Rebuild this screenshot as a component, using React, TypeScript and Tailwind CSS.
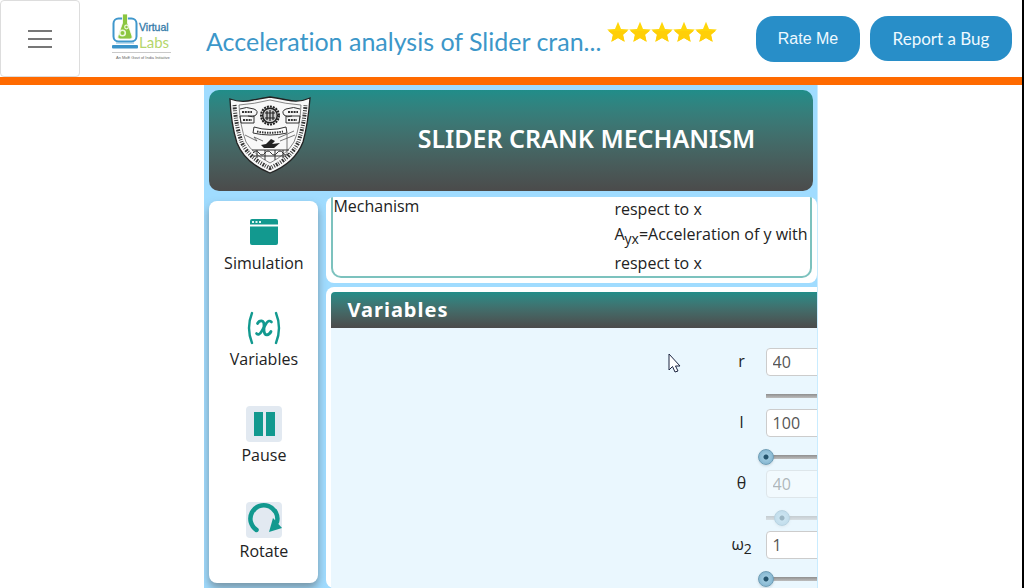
import React, { useState } from "react";

const Logo = () => (
  <svg viewBox="0 0 62 48" className="h-12 w-[62px]" role="img" aria-label="Virtual Labs">
    <rect x="1.500" y="5.500" width="23" height="23" rx="5" fill="#fff" stroke="#3f97cc" strokeWidth="2" />
    <rect x="0" y="32" width="26" height="3.600" rx="1" fill="#3a93c9" />
    <path d="M4 30h18" stroke="#7fb9dd" strokeWidth="1" />
    <path d="M10.500 1h5v9l4.500 13q1 3-2 3h-10q-3 0-2-3l4.500-13z" fill="#8cc63f" stroke="#fff" strokeWidth=".8" />
    <circle cx="10.500" cy="20" r="2.800" fill="none" stroke="#eef8dc" strokeWidth="1.600" />
    <circle cx="14.500" cy="14" r="1.800" fill="none" stroke="#eef8dc" strokeWidth="1.200" />
    <text x="27" y="18" fontSize="10.500" fill="#3279a8" stroke="#3279a8" strokeWidth=".3" fontFamily="'Liberation Sans', sans-serif">Virtual</text>
    <text x="27" y="35" fontSize="15" fill="#b4d66b" fontFamily="Lato, sans-serif">Labs</text>
    <path d="M0 39.500h59" stroke="#bbb" strokeWidth=".8" />
    <text x="4" y="46" fontSize="4" fill="#666" fontFamily="'Liberation Sans', sans-serif">An MoE Govt of India Initiative</text>
  </svg>
);

const Star = () => (
  <svg viewBox="0 0 22 22" className="size-[22px]" aria-hidden="true">
    <path d="M11 .8 14 7.9 21.8 8.6 16 13.7 17.6 20.8 11 17.1 4.4 20.8 6 13.7.2 8.6 8 7.9z" fill="#ffd60a" />
    <path d="M1.5 10 20.5 10 16 13.7 17.6 20.8 11 17.1 4.4 20.8 6 13.7z" fill="#ffcf08" />
  </svg>
);

const Shield = () => (
  <svg viewBox="0 0 82 78" className="h-[78px] w-[82px]" role="img" aria-label="Institute crest">
    <path d="M1 3Q12 7 24 4Q34 2 41 1Q48 2 58 4Q70 7 81 2Q79 28 74 46Q66 67 41 77Q16 67 8 47Q2 28 1 3z" fill="#f8f8f8" stroke="#222" strokeWidth="1.3" />
    <path d="M10 9Q25 8 41 4Q57 8 72 9Q71 32 65 46Q58 58 41 67Q24 58 17 46Q11 30 10 9z" fill="none" stroke="#555" strokeWidth=".7" />
    <path d="M5.500 9Q7 31 13 47Q21 63 41 72Q61 63 69 47Q75 30 76.500 9" fill="none" stroke="#333" strokeWidth="4" strokeDasharray="1 1.300 1.800 1 .8 1.500" />
    <circle cx="41" cy="19.500" r="9" fill="none" stroke="#222" strokeWidth="2" strokeDasharray="2 1" />
    <circle cx="41" cy="19.500" r="7.300" fill="#ccc" stroke="#222" strokeWidth="1.500" />
    <path d="M36 17h10M36 22h10M38 15v9M41 14v11M44 15v9" stroke="#222" strokeWidth="1.200" />
    <path d="M11 13q6-3 14 0q5 2 2 6q-3 3-8 1M71 13q-6-3-14 0q-5 2-2 6q3 3 8 1M11 20h14v7H12zM57 20h14l-1 7H57z" fill="none" stroke="#333" strokeWidth="1" />
    <path d="M13 16h10M14 24h9M59 16h10M59 24h9" stroke="#333" strokeWidth="2.200" strokeDasharray="2 .8" />
    <path d="M25 31Q41 36 57 31L58 37Q41 41 24 37z" fill="#fff" stroke="#333" />
    <path d="M28 35.500Q41 38 54 35.500" fill="none" stroke="#333" strokeWidth="2" strokeDasharray="1.500 1" />
    <path d="M16 39l12 6-3-4 9 4M51 45l15-6M49 42l16-7M58 38v20" fill="none" stroke="#555" strokeWidth=".8" />
    <path d="M32 49l5-1 5-5 4 2-3 3 8-1-6 5H35z" fill="#222" />
    <path d="M23 54h37M24 57q3-4 6 0t6 0t6 0t6 0t6 0t6 0M24 60h33M28 54v8M36 54v10M46 54v10M54 54v8" fill="none" stroke="#333" strokeWidth="1" />
  </svg>
);

const SimulationIcon = () => (
  <svg viewBox="0 0 28 26" className="h-[26px] w-7" fill="#12998f" aria-hidden="true">
    <path d="M2 0h24q2 0 2 2v3.500H0V2q0-2 2-2z" />
    <path d="M0 7.500h28V24q0 2-2 2H2q-2 0-2-2z" />
    <path d="M2 2h2v2H2zM5.500 2h2v2h-2zM9 2h2v2H9z" fill="#dff5f2" />
  </svg>
);

const VariablesIcon = () => (
  <svg viewBox="0 0 34 34" className="size-[34px]" fill="none" stroke="#12998f" strokeWidth="2.400" strokeLinecap="round" strokeLinejoin="round" aria-hidden="true">
    <path d="M5 2Q-1 17 5 32M29 2Q35 17 29 32" />
    <path d="M10.500 12.500Q12 9.500 15 10Q17 10.500 17 14L17 20Q17.500 24 20 23.800Q22.500 23.500 24 20.500" strokeWidth="2.800" />
    <path d="M24.500 11Q22 8.500 19.500 12L14.500 20.500Q12 25 9.500 22.500" strokeWidth="2.600" />
  </svg>
);

const PauseIcon = () => (
  <span className="flex size-9 items-center justify-center rounded bg-[#e2e9f1]">
    <svg viewBox="0 0 22 24" className="h-6 w-[22px]" fill="#12998f" aria-hidden="true">
      <path d="M1 0h9v24H1zM13 0h9v24h-9z" />
    </svg>
  </span>
);

const RotateIcon = () => (
  <span className="flex size-9 items-center justify-center rounded bg-[#e2e9f1]">
    <svg viewBox="0 0 36 36" className="size-9" aria-hidden="true">
      <path d="M10.500 28A13.500 13.500 0 1 1 31 20" fill="none" stroke="#12998f" strokeWidth="4.500" strokeLinecap="round" />
      <path d="M27 16 36 26 23 30z" fill="#12998f" />
    </svg>
  </span>
);

const tools = [
  { name: "Simulation", Icon: SimulationIcon },
  { name: "Variables", Icon: VariablesIcon },
  { name: "Pause", Icon: PauseIcon },
  { name: "Rotate", Icon: RotateIcon },
];

type Variable = { id: string; label: React.ReactNode; value: string; min: number; max: number; disabled?: boolean };

const variables: Variable[] = [
  { id: "r", label: "r", value: "40", min: 10, max: 50 },
  { id: "l", label: "l", value: "100", min: 100, max: 300 },
  { id: "theta", label: "θ", value: "40", min: 8, max: 360, disabled: true },
  { id: "omega", label: <>ω<sub className="text-sm">2</sub></>, value: "1", min: 1, max: 10 },
];

const VariableRow = ({ id, label, value, min, max, disabled }: Variable) => {
  const [current, setCurrent] = useState(value);
  return (
    <div className="flex h-[61px] shrink-0 items-start gap-3">
      <label htmlFor={id} className="w-6 pt-px text-center text-base leading-6 text-[#222]">{label}</label>
      <div className={disabled ? "opacity-40" : ""}>
        <input
          id={id}
          type="text"
          inputMode="numeric"
          disabled={disabled}
          value={current}
          onChange={(e) => setCurrent(e.target.value)}
          className="block h-7 w-44 rounded-sm border border-[#ccc] bg-white px-[6px] text-base text-[#555]"
        />
        <input
          type="range"
          aria-label={`${id} slider`}
          min={min}
          max={max}
          disabled={disabled}
          value={Number(current) || min}
          onChange={(e) => setCurrent(e.target.value)}
          className="mt-3 -ml-2 block h-4 w-48 appearance-none bg-[linear-gradient(#8f8f8f,#bdbdbd)] bg-[length:calc(100%-16px)_4px] bg-center bg-no-repeat [&::-webkit-slider-thumb]:size-4 [&::-webkit-slider-thumb]:appearance-none [&::-webkit-slider-thumb]:rounded-full [&::-webkit-slider-thumb]:border [&::-webkit-slider-thumb]:border-[#6f9db5] [&::-webkit-slider-thumb]:bg-[radial-gradient(circle,#25546d_0,#25546d_2px,#9cc8de_3px,#82b4cf_8px)] [&::-webkit-slider-thumb]:shadow"
        />
      </div>
    </div>
  );
};

export default function App() {
  return (
    <div className="flex h-screen flex-col overflow-hidden border-r-2 border-black bg-white font-['Open_Sans','Noto_Sans',sans-serif] text-[#222]">
      <header className="flex h-[85px] shrink-0 items-start border-b-8 border-[#ff6a00]">
        <button aria-label="Menu" className="flex h-[77px] w-20 shrink-0 items-center justify-center rounded border border-[#ddd]">
          <svg viewBox="0 0 24 20" className="h-5 w-6" stroke="#777" strokeWidth="2" aria-hidden="true">
            <path d="M0 2h24M0 10h24M0 18h24" />
          </svg>
        </button>
        <a href="#home" className="ml-8 shrink-0 pt-[13px]"><Logo /></a>
        <h1 className="ml-8 whitespace-nowrap pt-[23px] font-['Lato',sans-serif] text-[25px] font-normal leading-9 text-[#3c97c9] [font-variant-ligatures:none]">
          Acceleration analysis of Slider cran...
        </h1>
        <div role="img" aria-label="5 stars" className="ml-auto flex pt-[21px]">
          {[1, 2, 3, 4, 5].map((n) => <Star key={n} />)}
        </div>
        <div className="ml-[39px] mr-[10px] flex shrink-0 items-start gap-[10px] pt-4 text-[#eef9ff]">
          <button className="h-[46px] w-[104px] rounded-[18px] bg-[#288ec8] font-['Liberation_Sans',sans-serif] text-base font-medium">Rate Me</button>
          <button className="h-[45px] w-[142px] rounded-[18px] bg-[#288ec8] font-['Lato',sans-serif] text-[17px]">Report a Bug</button>
        </div>
      </header>

      <main className="ml-[20%] flex min-h-0 w-3/5 flex-1 flex-col overflow-hidden border-r border-[#c9ecff] bg-[#a0dcff] pl-[5px] pt-[5px]">
        <div className="mr-1 flex h-[101px] shrink-0 items-start rounded-[10px] bg-linear-to-b from-[#208d89] to-[#4b4b4b] pl-5 pt-[6px]">
          <Shield />
          <h2 className="flex-1 pl-[49px] pt-6 text-center font-['Noto_Sans',sans-serif] text-[25px] font-semibold leading-9 text-white">
            SLIDER CRANK MECHANISM
          </h2>
        </div>

        <div className="flex min-h-0 flex-1 gap-2 pt-[6px]">
          <nav className="mb-[5px] mt-1 flex w-[109px] shrink-0 flex-col rounded-lg bg-white pt-3 shadow-[0_5px_8px_rgba(80,80,80,.5)]">
            {tools.map(({ name, Icon }) => (
              <button key={name} className="flex h-24 shrink-0 flex-col items-center text-base leading-6">
                <span className="flex h-[38px] items-center"><Icon /></span>
                {name}
              </button>
            ))}
          </nav>

          <div className="flex min-w-0 flex-1 flex-col gap-1 overflow-hidden">
            <section className="h-[86px] shrink-0 overflow-hidden rounded-lg bg-white px-[5px] pb-[5px]">
              <div className="flex h-full items-start justify-between rounded-b-[10px] border-2 border-t-0 border-[#7cc2be] text-base">
                <p className="leading-[18px]">Mechanism</p>
                <div className="shrink-0 pr-[2px]">
                  <p className="leading-6">respect to x</p>
                  <p className="pb-1 leading-[26px]">A<sub className="text-sm">yx</sub>=Acceleration of y with</p>
                  <p className="leading-6">respect to x</p>
                </div>
              </div>
            </section>

            <section className="relative flex min-h-0 flex-1 flex-col overflow-hidden rounded-l-lg bg-white pl-[5px] pt-[5px]">
              <h3 className="h-9 shrink-0 rounded-tl bg-linear-to-b from-[#208d89] to-[#4b4b4b] pl-4 font-['Noto_Sans',sans-serif] text-xl font-bold leading-9 tracking-wider text-white">
                Variables
              </h3>
              <div className="flex min-h-0 flex-1 justify-end overflow-hidden bg-[#eaf7fe] pt-5">
                <div className="-mr-[125px] flex w-44 shrink-0 flex-col items-start">
                  <div className="-ml-9">
                    {variables.map((v) => <VariableRow key={v.id} {...v} />)}
                  </div>
                </div>
              </div>
              <svg viewBox="0 0 13 20" className="absolute left-[342px] top-[66px] h-5 w-[13px]" aria-hidden="true">
                <path d="M1 1v16l3.500-3.500L7 19l3-1-2.500-5H12z" fill="#fff" stroke="#1c2440" />
              </svg>
            </section>
          </div>
        </div>
      </main>
    </div>
  );
}
